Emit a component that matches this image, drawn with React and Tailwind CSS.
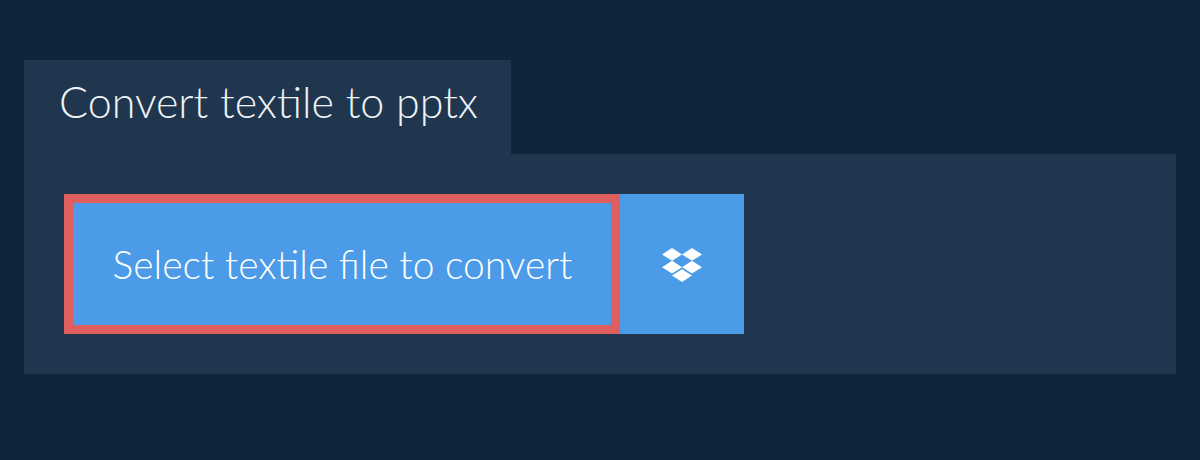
import { FaDropbox } from "react-icons/fa";

export default function App() {
  return (
    <div className="min-h-[460px] bg-[#10253a] pt-[60px] px-6 font-['Lato','Noto_Sans',sans-serif]">
      <div className="flex">
        <h1 className="bg-[#20364f] pl-[35px] pr-[33px] h-[94px] pt-5 text-[43px] leading-[44px] font-light text-[#eff3f6]">Convert textile to pptx</h1>
      </div>
      <div className="bg-[#20364f] p-10 flex">
        <button className="h-[140px] w-[556px] bg-[#4c9be8] border-[9px] border-[#df5e5e] pl-px text-white text-[39px] font-light">Select textile file to convert</button>
        <button className="h-[140px] w-[124px] bg-[#4c9be8] flex items-center justify-center">
          <FaDropbox className="w-10 h-10 mt-[2px] text-white" />
        </button>
      </div>
    </div>
  );
}
